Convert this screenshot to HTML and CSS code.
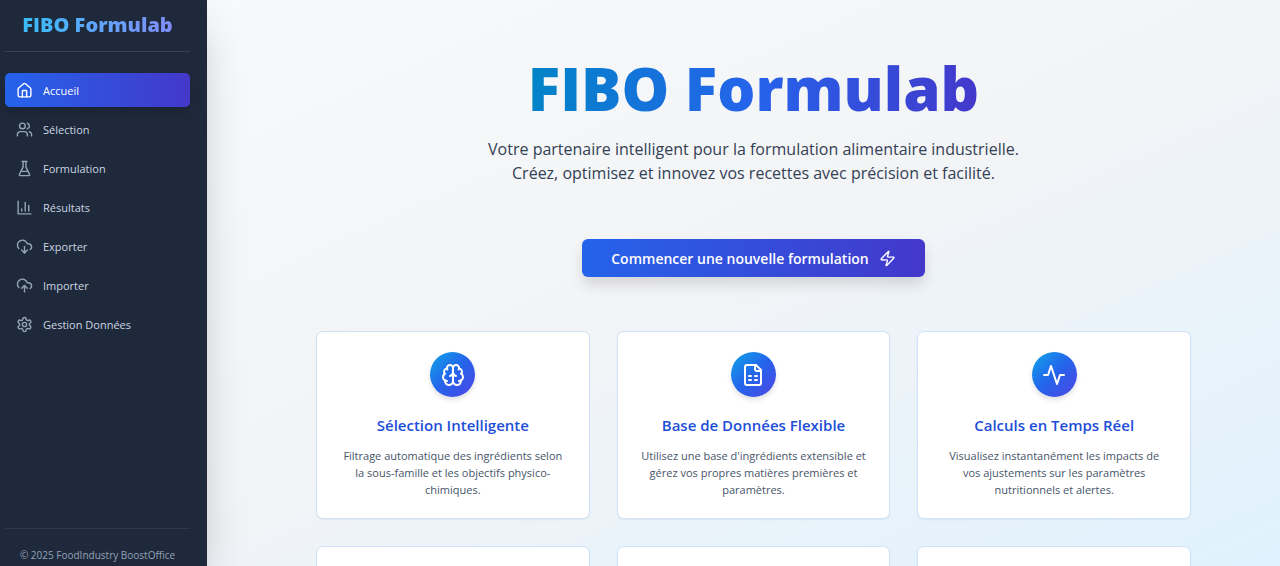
FILE: index.html
```html
<!DOCTYPE html>
<html lang="fr">
<head>
<meta charset="utf-8">
<meta name="viewport" content="width=device-width, initial-scale=1">
<title>FIBO Formulab</title>
<link rel="stylesheet" href="styles.css">
</head>
<body>
<div class="app">
  <aside class="sidebar">
    <div class="brand"><span class="brand-name">FIBO Formulab</span></div>
    <nav class="nav">
      <a class="nav-link active" href="#accueil"><svg class="icon" viewBox="0 0 24 24"><path d="M15 21v-8a1 1 0 0 0-1-1h-4a1 1 0 0 0-1 1v8"/><path d="M3 10a2 2 0 0 1 .709-1.528l7-5.999a2 2 0 0 1 2.582 0l7 5.999A2 2 0 0 1 21 10v9a2 2 0 0 1-2 2H5a2 2 0 0 1-2-2z"/></svg>Accueil</a>
      <a class="nav-link" href="#selection"><svg class="icon" viewBox="0 0 24 24"><path d="M16 21v-2a4 4 0 0 0-4-4H6a4 4 0 0 0-4 4v2"/><circle cx="9" cy="7" r="4"/><path d="M22 21v-2a4 4 0 0 0-3-3.87"/><path d="M16 3.13a4 4 0 0 1 0 7.75"/></svg>Sélection</a>
      <a class="nav-link" href="#formulation"><svg class="icon" viewBox="0 0 24 24"><path d="M10 2v7.527a2 2 0 0 1-.211.896L4.72 20.55a1 1 0 0 0 .9 1.45h12.76a1 1 0 0 0 .9-1.45l-5.069-10.127A2 2 0 0 1 14 9.527V2"/><path d="M8.5 2h7"/><path d="M7 16h10"/></svg>Formulation</a>
      <a class="nav-link" href="#resultats"><svg class="icon" viewBox="0 0 24 24"><path d="M3 3v18h18"/><path d="M18 17V9"/><path d="M13 17V5"/><path d="M8 17v-3"/></svg>Résultats</a>
      <a class="nav-link" href="#exporter"><svg class="icon" viewBox="0 0 24 24"><path d="M4 14.899A7 7 0 1 1 15.71 8h1.79a4.5 4.5 0 0 1 2.5 8.242"/><path d="M12 12v9"/><path d="m8 17 4 4 4-4"/></svg>Exporter</a>
      <a class="nav-link" href="#importer"><svg class="icon" viewBox="0 0 24 24"><path d="M4 14.899A7 7 0 1 1 15.71 8h1.79a4.5 4.5 0 0 1 2.5 8.242"/><path d="M12 12v9"/><path d="m16 16-4-4-4 4"/></svg>Importer</a>
      <a class="nav-link" href="#donnees"><svg class="icon" viewBox="0 0 24 24"><path d="M12.22 2h-.44a2 2 0 0 0-2 2v.18a2 2 0 0 1-1 1.73l-.43.25a2 2 0 0 1-2 0l-.15-.08a2 2 0 0 0-2.73.73l-.22.38a2 2 0 0 0 .73 2.73l.15.1a2 2 0 0 1 1 1.72v.51a2 2 0 0 1-1 1.74l-.15.09a2 2 0 0 0-.73 2.73l.22.38a2 2 0 0 0 2.73.73l.15-.08a2 2 0 0 1 2 0l.43.25a2 2 0 0 1 1 1.73V20a2 2 0 0 0 2 2h.44a2 2 0 0 0 2-2v-.18a2 2 0 0 1 1-1.73l.43-.25a2 2 0 0 1 2 0l.15.08a2 2 0 0 0 2.73-.73l.22-.39a2 2 0 0 0-.73-2.73l-.15-.08a2 2 0 0 1-1-1.74v-.5a2 2 0 0 1 1-1.74l.15-.09a2 2 0 0 0 .73-2.73l-.22-.38a2 2 0 0 0-2.73-.73l-.15.08a2 2 0 0 1-2 0l-.43-.25a2 2 0 0 1-1-1.73V4a2 2 0 0 0-2-2z"/><circle cx="12" cy="12" r="3"/></svg>Gestion Données</a>
    </nav>
    <footer class="legal">© 2025 FoodIndustry BoostOffice</footer>
  </aside>
  <main class="main">
    <header class="hero">
      <h1 class="hero-title">FIBO Formulab</h1>
      <p class="hero-text">Votre partenaire intelligent pour la formulation alimentaire industrielle. Créez, optimisez et innovez vos recettes avec précision et facilité.</p>
      <button class="cta" type="button">Commencer une nouvelle formulation<svg class="icon" viewBox="0 0 24 24"><path d="M4 14a1 1 0 0 1-.78-1.63l9.9-10.2a.5.5 0 0 1 .86.46l-1.92 6.02A1 1 0 0 0 13 10h7a1 1 0 0 1 .78 1.63l-9.9 10.2a.5.5 0 0 1-.86-.46l1.92-6.02A1 1 0 0 0 11 14z"/></svg></button>
    </header>
    <section class="cards">
      <article class="card">
        <span class="badge"><svg class="icon" viewBox="0 0 24 24"><path d="M12 5a3 3 0 1 0-5.997.125 4 4 0 0 0-2.526 5.77 4 4 0 0 0 .556 6.588A4 4 0 1 0 12 18Z"/><path d="M12 5a3 3 0 1 1 5.997.125 4 4 0 0 1 2.526 5.77 4 4 0 0 1-.556 6.588A4 4 0 1 1 12 18Z"/><path d="M15 13a4.5 4.5 0 0 1-3-4 4.5 4.5 0 0 1-3 4"/><path d="M17.599 6.5a3 3 0 0 0 .399-1.375"/><path d="M6.003 5.125A3 3 0 0 0 6.401 6.5"/><path d="M3.477 10.896a4 4 0 0 1 .585-.396"/><path d="M19.938 10.5a4 4 0 0 1 .585.396"/><path d="M6 18a4 4 0 0 1-1.967-.516"/><path d="M19.967 17.484A4 4 0 0 1 18 18"/></svg></span>
        <h2 class="card-title">Sélection Intelligente</h2>
        <p class="card-text">Filtrage automatique des ingrédients selon la sous-famille et les objectifs physico-chimiques.</p>
      </article>
      <article class="card">
        <span class="badge"><svg class="icon" viewBox="0 0 24 24"><path d="M15 2H6a2 2 0 0 0-2 2v16a2 2 0 0 0 2 2h12a2 2 0 0 0 2-2V7Z"/><path d="M14 2v4a2 2 0 0 0 2 2h4"/><path d="M8 13h2"/><path d="M14 13h2"/><path d="M8 17h2"/><path d="M14 17h2"/></svg></span>
        <h2 class="card-title">Base de Données Flexible</h2>
        <p class="card-text">Utilisez une base d'ingrédients extensible et gérez vos propres matières premières et paramètres.</p>
      </article>
      <article class="card">
        <span class="badge"><svg class="icon" viewBox="0 0 24 24"><path d="M22 12h-4l-3 9L9 3l-3 9H2"/></svg></span>
        <h2 class="card-title">Calculs en Temps Réel</h2>
        <p class="card-text">Visualisez instantanément les impacts de vos ajustements sur les paramètres nutritionnels et alertes.</p>
      </article>
      <article class="card"></article>
      <article class="card"></article>
      <article class="card"></article>
    </section>
  </main>
</div>
</body>
</html>
```
FILE: styles.css
```css
* {
  box-sizing: border-box;
}

body,
h1,
h2,
p {
  margin: 0;
}

body {
  font-family: "Segoe UI", "Open Sans", "Noto Sans", sans-serif;
  color: #334155;
}

.icon {
  flex: none;
  width: 17px;
  height: 17px;
  fill: none;
  stroke: currentColor;
  stroke-width: 2;
  stroke-linecap: round;
  stroke-linejoin: round;
}

.app {
  display: flex;
  height: 100vh;
  overflow: hidden;
  background: linear-gradient(to bottom right, #f8fafc, #f3f4f6 50%, #e0f2fe);
}

/* Sidebar */
.sidebar {
  display: flex;
  flex: none;
  flex-direction: column;
  width: 207px;
  padding: 0 17px 0 5px;
  background: #1e293b;
  box-shadow: 0 21px 43px -10px rgba(0, 0, 0, 0.25);
}

.brand {
  display: flex;
  justify-content: center;
  padding: 10px 0 11px;
  border-bottom: 1px solid #334155;
  font-size: 20px;
  font-weight: 800;
  line-height: 30px;
}

.brand-name,
.hero-title {
  background-clip: text;
  color: transparent;
}

.brand-name {
  background-image: linear-gradient(to right, #38bdf8, #60a5fa, #818cf8);
}

.nav {
  display: flex;
  flex: 1;
  flex-direction: column;
  gap: 5px;
  padding-top: 21px;
}

.nav-link {
  display: flex;
  align-items: center;
  gap: 10px;
  height: 34px;
  padding: 0 11px;
  border-radius: 5px;
  color: #cbd5e1;
  font-size: 11px;
  text-decoration: none;
}

.nav-link .icon {
  color: #94a3b8;
}

.nav-link.active {
  background: linear-gradient(to right, #2563eb, #4338ca);
  box-shadow: 0 8px 13px rgba(0, 0, 0, 0.12);
  color: #fff;
}

.nav-link.active .icon {
  color: #fff;
}

.legal {
  padding: 17px 0 2px;
  border-top: 1px solid #2b3a4e;
  color: #94a3b8;
  font-size: 10px;
  line-height: 18px;
  text-align: center;
}

/* Page */
.main {
  flex: 1;
  padding: 54px 20px 0 40px;
  overflow-y: auto;
  scrollbar-width: none;
}

.hero {
  display: flex;
  flex-direction: column;
  align-items: center;
  margin-bottom: 54px;
  text-align: center;
}

.hero-title {
  padding-bottom: 15px;
  background-image: linear-gradient(to right, #0284c7, #2563eb, #4338ca);
  font-size: 60px;
  font-weight: 800;
  line-height: 68px;
}

.hero-text {
  max-width: 580px;
  margin-bottom: 54px;
  font-size: 16px;
  line-height: 24px;
}

.cta {
  display: flex;
  align-items: center;
  gap: 10px;
  height: 38px;
  padding: 0 29px;
  border: 0;
  border-radius: 6px;
  background: linear-gradient(to right, #2563eb, #4338ca);
  box-shadow: 0 8px 13px rgba(0, 0, 0, 0.12);
  color: #fff;
  font-family: inherit;
  font-size: 14px;
  font-weight: 600;
}

.cards {
  display: grid;
  grid-template-columns: repeat(3, 1fr);
  gap: 27px;
  max-width: 875px;
  margin: 0 auto;
}

.card {
  display: flex;
  flex-direction: column;
  align-items: center;
  min-height: 188px;
  padding: 20px 22px;
  border: 1px solid #cfe3fb;
  border-radius: 7px;
  background: #fff;
  box-shadow: 0 1px 2px rgba(0, 0, 0, 0.06);
  text-align: center;
}

.badge {
  display: flex;
  align-items: center;
  justify-content: center;
  width: 45px;
  height: 45px;
  margin-bottom: 16px;
  border-radius: 50%;
  background: linear-gradient(to bottom right, #0ea5e9, #2563eb, #4f46e5);
  box-shadow: 0 3px 5px rgba(0, 0, 0, 0.12);
  color: #fff;
}

.badge .icon {
  width: 24px;
  height: 24px;
}

.card-title {
  margin-bottom: 10px;
  color: #1d4ed8;
  font-size: 15px;
  font-weight: 600;
  line-height: 24px;
}

.card-text {
  color: #475569;
  font-size: 11px;
  line-height: 17px;
}
```
